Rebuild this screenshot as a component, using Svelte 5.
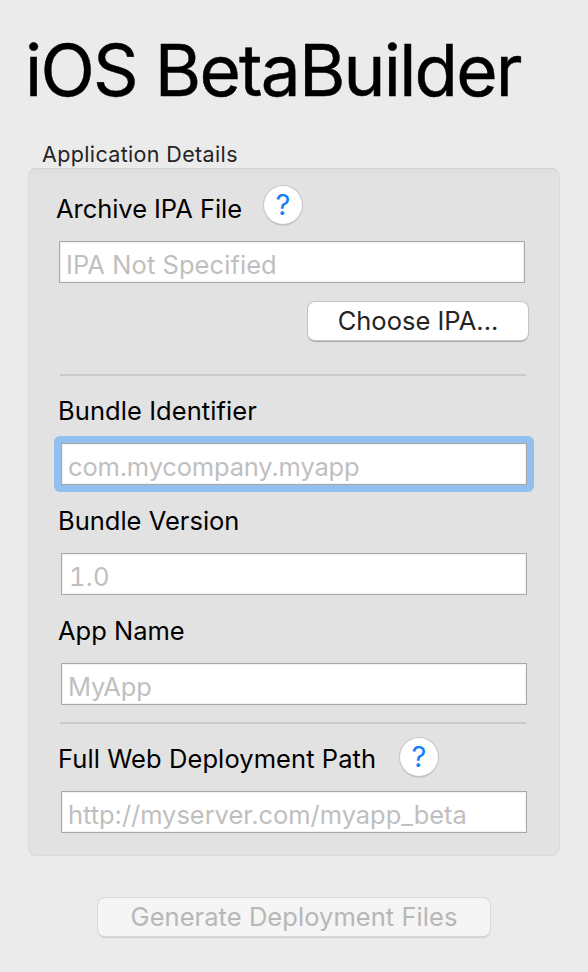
<script>
  let ipa = $state('');
  let bundleId = $state('');
  let version = $state('');
  let appName = $state('');
  let webPath = $state('');
</script>

<main>
  <h1>iOS BetaBuilder</h1>
  <h2>Application Details</h2>

  <section class="panel">
    <div class="row archive">
      <label class="l-archive" for="ipa">Archive IPA File</label>
      <button class="help" aria-label="Archive help"><span>?</span></button>
    </div>
    <input id="ipa" class="first" placeholder="IPA Not Specified" bind:value={ipa} />
    <button class="push choose">Choose IPA...</button>

    <hr />

    <label class="l-id" for="bundle">Bundle Identifier</label>
    <div class="ring">
      <input id="bundle" class="bundle" placeholder="com.mycompany.myapp" bind:value={bundleId} />
    </div>

    <label class="l-version" for="version">Bundle Version</label>
    <input id="version" class="version" placeholder="1.0" bind:value={version} />

    <label class="l-name" for="name">App Name</label>
    <input id="name" class="name" placeholder="MyApp" bind:value={appName} />

    <hr class="second" />

    <div class="row web">
      <label class="l-web" for="path">Full Web Deployment Path</label>
      <button class="help" aria-label="Deployment path help"><span>?</span></button>
    </div>
    <input id="path" class="path" placeholder="http://myserver.com/myapp_beta" bind:value={webPath} />
  </section>

  <button class="push generate" disabled>Generate Deployment Files</button>
</main>

<style>
  :global(body) {
    margin: 0;
    background: #ebebeb;
  }
  main {
    box-sizing: border-box;
    width: 588px;
    height: 972px;
    overflow: hidden;
    display: flex;
    flex-direction: column;
    background: #ebebeb;
    color: #000;
    font-family: Inter, 'Liberation Sans', sans-serif;
    font-size: 25.5px;
    line-height: 30px;
    white-space: nowrap;
  }
  h1 {
    margin: 0;
    padding: 30px 0 0 25px;
    height: 80px;
    line-height: 80px;
    font-size: 71px;
    font-weight: 400;
    letter-spacing: -1.8px;
    -webkit-text-stroke: 0.5px #000;
  }
  h2 {
    margin: 0;
    padding: 31px 0 0 42px;
    height: 27px;
    line-height: 26px;
    font-size: 21.5px;
    font-weight: 400;
    letter-spacing: 0.36px;
    color: #242424;
  }
  .panel {
    box-sizing: border-box;
    margin-left: 28px;
    width: 532px;
    height: 688px;
    padding: 16px 32px 0 31px;
    border: 1px solid #dadada;
    border-top-color: #d2d2d2;
    border-radius: 8px;
    background: linear-gradient(#dfdfdf, #e2e2e2 10px);
    display: flex;
    flex-direction: column;
    align-items: flex-start;
  }
  .row {
    display: flex;
    align-items: flex-start;
    height: 40px;
  }
  .row label {
    margin-top: 9px;
  }
  .archive {
    margin-left: -2px;
    height: 56px;
  }
  .archive label { width: 208px; letter-spacing: -0.05px; }
  .web { margin-top: 13px; height: 54px; }
  .web label { width: 342px; margin-top: 7px; letter-spacing: 0.08px; }
  label {
    display: block;
    margin-left: -2px;
    height: 30px;
  }
  .l-id { letter-spacing: 0.07px; }
  input {
    box-sizing: border-box;
    flex: none;
    width: 466px;
    height: 42px;
    margin: 0 0 0 1px;
    padding: 5px 6px 0;
    border: 1px solid #a9a9a9;
    border-radius: 0;
    outline: none;
    background: #fff;
    box-shadow: inset 0 0 0 1px #f2f2f2;
    font: inherit;
    color: #000;
  }
  input::placeholder {
    color: #bfbfbf;
    opacity: 1;
  }
  input.first { margin-left: -1px; letter-spacing: 0.06px; }
  .ring {
    display: flex;
    flex: none;
    margin: 10px 0 -7px -6px;
    padding: 7px;
    border-radius: 6px;
    background: #92bfee;
  }
  input.bundle { margin: 0; letter-spacing: -0.17px; }
  hr {
    flex: none;
    width: 466px;
    height: 2px;
    margin: 34px 0 20px;
    border: 0;
    background: #cacaca;
  }
  hr.second { margin: 17px 0 0; }
  .l-version { margin-top: 21px; }
  input.version {
    margin-top: 17px;
    padding-left: 7px;
    font-feature-settings: 'tnum';
    letter-spacing: 0.3px;
  }
  .l-name { margin-top: 21px; }
  input.name { margin-top: 17px; letter-spacing: -0.2px; }
  input.path { letter-spacing: -0.04px; }
  .help {
    box-sizing: border-box;
    flex: none;
    width: 38px;
    height: 38px;
    margin-top: 1px;
    padding: 0;
    border: 0;
    border-radius: 50%;
    background: #fff;
    box-shadow: 0 0 0 1px #c6c6c6, 0 1.5px 1px #a9a9a9;
    color: #147efb;
    font: 29px/38px Inter, 'Liberation Sans', sans-serif;
    text-align: center;
  }
  .help span { display: block; }
  .push {
    box-sizing: border-box;
    flex: none;
    height: 38px;
    padding: 0;
    border: 0;
    border-radius: 7px;
    background: #fff;
    box-shadow: 0 0 0 1px #c3c3c3, 0 1.5px 1px #aaa;
    color: #242424;
    font: inherit;
    line-height: 38px;
    text-align: center;
  }
  .choose {
    width: 220px;
    margin: 19px 0 0 248px;
  }
  .generate {
    width: 392px;
    margin: 42px 0 0 98px;
    background: #f5f5f5;
    box-shadow: 0 0 0 1px #d8d8d8, 0 1.5px 1px #ccc;
    color: #b7b7b7;
    letter-spacing: 0.05px;
  }
</style>
